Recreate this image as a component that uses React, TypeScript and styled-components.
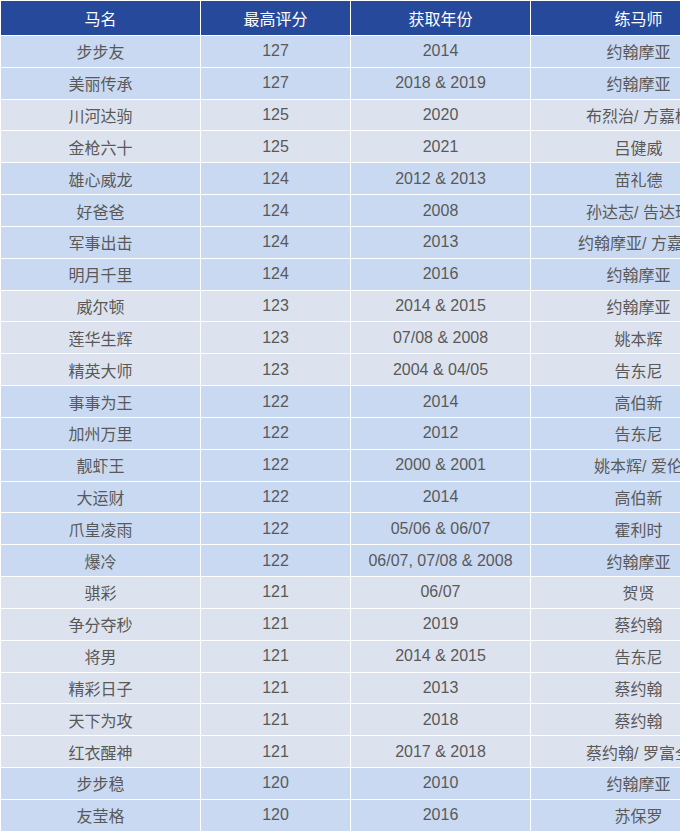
import styled, { createGlobalStyle } from "styled-components";

const GlobalStyle = createGlobalStyle`
  html, body {
    margin: 0;
    padding: 0;
    overflow: hidden;
    background: #ffffff;
  }
`;

const Table = styled.table`
  border-collapse: collapse;
  table-layout: fixed;
  width: 746px;
  font-family: "Liberation Sans", "Noto Sans CJK SC", sans-serif;
  font-size: 16px;
  border-top: 1px solid #ffffff;
  border-left: 1px solid #ffffff;
`;

const HeadCell = styled.th<{ $w: number }>`
  width: ${(p) => p.$w}px;
  height: 34px;
  padding: 0;
  background: #27499b;
  color: #ffffff;
  font-weight: normal;
  text-align: center;
  border-right: 1px solid #ffffff;
  white-space: nowrap;
  overflow: hidden;
`;

const Row = styled.tr<{ $grey: boolean }>`
  background: ${(p) => (p.$grey ? "#dde3ee" : "#cad9f2")};
`;

const Cell = styled.td`
  height: 30.84px;
  padding: 0;
  color: #595959;
  text-align: center;
  border-right: 1px solid #ffffff;
  border-top: 1px solid #ffffff;
  white-space: nowrap;
  overflow: hidden;
`;

interface Horse {
  name: string;
  rating: number;
  years: string;
  trainer: string;
}

const horses: Horse[] = [
  { name: "步步友", rating: 127, years: "2014", trainer: "约翰摩亚" },
  { name: "美丽传承", rating: 127, years: "2018 & 2019", trainer: "约翰摩亚" },
  { name: "川河达驹", rating: 125, years: "2020", trainer: "布烈治/ 方嘉柏" },
  { name: "金枪六十", rating: 125, years: "2021", trainer: "吕健威" },
  { name: "雄心威龙", rating: 124, years: "2012 & 2013", trainer: "苗礼德" },
  { name: "好爸爸", rating: 124, years: "2008", trainer: "孙达志/ 告达理" },
  { name: "军事出击", rating: 124, years: "2013", trainer: "约翰摩亚/ 方嘉柏" },
  { name: "明月千里", rating: 124, years: "2016", trainer: "约翰摩亚" },
  { name: "威尔顿", rating: 123, years: "2014 & 2015", trainer: "约翰摩亚" },
  { name: "莲华生辉", rating: 123, years: "07/08 & 2008", trainer: "姚本辉" },
  { name: "精英大师", rating: 123, years: "2004 & 04/05", trainer: "告东尼" },
  { name: "事事为王", rating: 122, years: "2014", trainer: "高伯新" },
  { name: "加州万里", rating: 122, years: "2012", trainer: "告东尼" },
  { name: "靓虾王", rating: 122, years: "2000 & 2001", trainer: "姚本辉/ 爱伦" },
  { name: "大运财", rating: 122, years: "2014", trainer: "高伯新" },
  { name: "爪皇凌雨", rating: 122, years: "05/06 & 06/07", trainer: "霍利时" },
  { name: "爆冷", rating: 122, years: "06/07, 07/08 & 2008", trainer: "约翰摩亚" },
  { name: "骐彩", rating: 121, years: "06/07", trainer: "贺贤" },
  { name: "争分夺秒", rating: 121, years: "2019", trainer: "蔡约翰" },
  { name: "将男", rating: 121, years: "2014 & 2015", trainer: "告东尼" },
  { name: "精彩日子", rating: 121, years: "2013", trainer: "蔡约翰" },
  { name: "天下为攻", rating: 121, years: "2018", trainer: "蔡约翰" },
  { name: "红衣醒神", rating: 121, years: "2017 & 2018", trainer: "蔡约翰/ 罗富全" },
  { name: "步步稳", rating: 120, years: "2010", trainer: "约翰摩亚" },
  { name: "友莹格", rating: 120, years: "2016", trainer: "苏保罗" },
];

// rows are shaded by rating group: 127 blue, 125 grey, 124 blue ...
const greyRatings = [125, 123, 121];

export default function App() {
  return (
    <>
      <GlobalStyle />
      <Table>
        <thead>
          <tr>
            <HeadCell $w={199}>马名</HeadCell>
            <HeadCell $w={149}>最高评分</HeadCell>
            <HeadCell $w={179}>获取年份</HeadCell>
            <HeadCell $w={215}>练马师</HeadCell>
          </tr>
        </thead>
        <tbody>
          {horses.map((h) => (
            <Row key={h.name} $grey={greyRatings.includes(h.rating)}>
              <Cell>{h.name}</Cell>
              <Cell>{h.rating}</Cell>
              <Cell>{h.years}</Cell>
              <Cell>{h.trainer}</Cell>
            </Row>
          ))}
        </tbody>
      </Table>
    </>
  );
}
